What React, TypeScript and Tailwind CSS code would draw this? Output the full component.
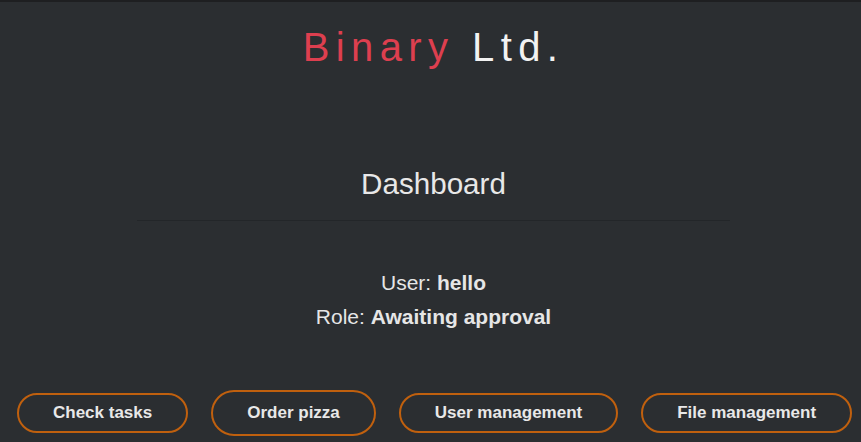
export default function App() {
  const buttons = [
    { label: 'Check tasks', tall: false },
    { label: 'Order pizza', tall: true },
    { label: 'User management', tall: false },
    { label: 'File management', tall: false },
  ];

  return (
    <div className="w-[861px] h-[442px] overflow-hidden bg-[#2b2e31] flex flex-col" style={{ fontFamily: '"Liberation Sans", Arial, sans-serif' }}>
      <div className="h-[2px] bg-[#1e1f21]" />

      <div className="pl-[6px] flex flex-col">
        <h1 className="mt-[22px] text-center text-[40px] leading-[46px] tracking-[0.16em] font-normal">
          <span className="text-[#dd3f4f]">Binary</span>{' '}
          <span className="text-[#f2f2f2]">Ltd.</span>
        </h1>

        <h2 className="mt-[97px] text-center text-[29.6px] leading-[34.5px] text-[#e8e8e8] font-normal">
          Dashboard
        </h2>
        <hr className="mt-[18px] mx-auto w-[593px] border-0 border-t border-[#232629]" />

        <div className="mt-[45px] text-center text-[21px] leading-[34px] text-[#e6e6e6]">
          <p>
            User: <b className="font-bold">hello</b>
          </p>
          <p>
            Role: <b className="font-bold">Awaiting approval</b>
          </p>
        </div>
      </div>

      <div className="mt-[56px] flex items-center gap-[23px] pl-[17px]">
        {buttons.map((b) => (
          <button
            key={b.label}
            className={
              'rounded-full border-2 border-[#c0600e] px-[34px] text-[17px] leading-5 font-bold text-[#e8e8e8] bg-transparent ' +
              (b.tall ? 'py-[11px]' : 'py-2')
            }
          >
            {b.label}
          </button>
        ))}
      </div>
    </div>
  );
}
